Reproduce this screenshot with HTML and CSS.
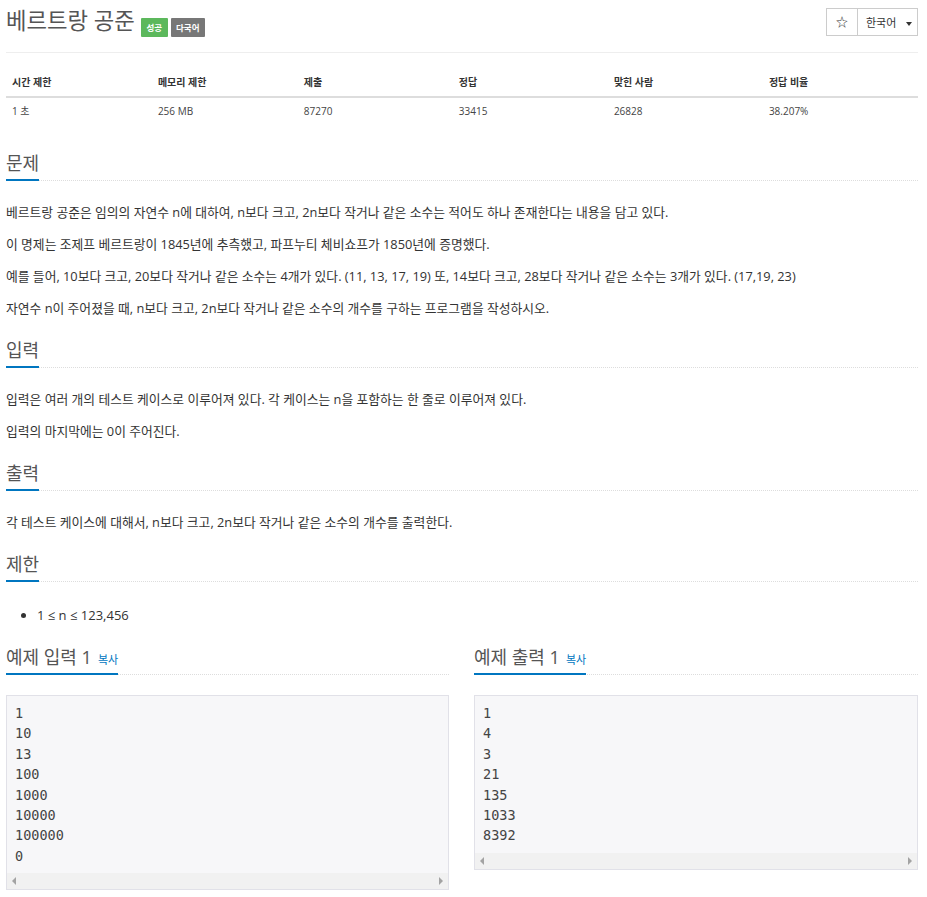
FILE: index.html
```html
<!DOCTYPE html>
<html lang="ko">
<head>
  <meta charset="UTF-8" />
  <meta name="viewport" content="width=device-width, initial-scale=1.0"/>
  <title>베르트랑 공준</title>
  <link rel="stylesheet" href="styles.css">
</head>
<body>

  <div class="container">

    <div class="page-header">
      <div class="title-wrap">
        <h1 class="problem-title">베르트랑 공준</h1>
        <span class="label label-success">성공</span>
        <span class="label label-default">다국어</span>
      </div>
      <div class="btn-group">
        <button class="btn btn-star">☆</button>
        <button class="btn btn-lang">한국어 <span class="caret"></span></button>
      </div>
    </div>

    <table class="problem-info">
      <thead>
        <tr>
          <th>시간 제한</th>
          <th>메모리 제한</th>
          <th>제출</th>
          <th>정답</th>
          <th>맞힌 사람</th>
          <th>정답 비율</th>
        </tr>
      </thead>
      <tbody>
        <tr>
          <td>1 초</td>
          <td>256 MB</td>
          <td>87270</td>
          <td>33415</td>
          <td>26828</td>
          <td>38.207%</td>
        </tr>
      </tbody>
    </table>

    <section class="problem-section">
      <div class="headline"><h2>문제</h2></div>
      <p>베르트랑 공준은 임의의 자연수 n에 대하여, n보다 크고, 2n보다 작거나 같은 소수는 적어도 하나 존재한다는 내용을 담고 있다.</p>
      <p>이 명제는 조제프 베르트랑이 1845년에 추측했고, 파프누티 체비쇼프가 1850년에 증명했다.</p>
      <p>예를 들어, 10보다 크고, 20보다 작거나 같은 소수는 4개가 있다. (11, 13, 17, 19) 또, 14보다 크고, 28보다 작거나 같은 소수는 3개가 있다. (17,19, 23)</p>
      <p>자연수 n이 주어졌을 때, n보다 크고, 2n보다 작거나 같은 소수의 개수를 구하는 프로그램을 작성하시오.</p>
    </section>

    <section class="problem-section">
      <div class="headline"><h2>입력</h2></div>
      <p>입력은 여러 개의 테스트 케이스로 이루어져 있다. 각 케이스는 n을 포함하는 한 줄로 이루어져 있다.</p>
      <p>입력의 마지막에는 0이 주어진다.</p>
    </section>

    <section class="problem-section">
      <div class="headline"><h2>출력</h2></div>
      <p>각 테스트 케이스에 대해서, n보다 크고, 2n보다 작거나 같은 소수의 개수를 출력한다.</p>
    </section>

    <section class="problem-section">
      <div class="headline"><h2>제한</h2></div>
      <ul class="limit-list">
        <li>1 ≤ n ≤ 123,456</li>
      </ul>
    </section>

    <div class="samples">
      <section class="sample">
        <div class="headline"><h2 class="sample-title"><span>예제 입력 1</span><a class="copy-btn" href="#">복사</a></h2></div>
        <div class="sample-box">
          <pre class="sampledata">1
10
13
100
1000
10000
100000
0</pre>
          <div class="hscroll"><span class="arrow-left"></span><span class="arrow-right"></span></div>
        </div>
      </section>
      <section class="sample">
        <div class="headline"><h2 class="sample-title"><span>예제 출력 1</span><a class="copy-btn" href="#">복사</a></h2></div>
        <div class="sample-box">
          <pre class="sampledata">1
4
3
21
135
1033
8392</pre>
          <div class="hscroll"><span class="arrow-left"></span><span class="arrow-right"></span></div>
        </div>
      </section>
    </div>

  </div>

</body>
</html>
```

FILE: styles.css
```css
body {
  margin: 0;
  padding: 0;
  font-family: 'Open Sans', 'Noto Sans CJK KR', sans-serif;
  color: #333;
  background: #fff;
}

.container {
  width: 912px;
  margin-left: 6px;
}

/* header */
.page-header {
  display: flex;
  justify-content: space-between;
  height: 52px;
  border-bottom: 1px solid #eee;
}

.title-wrap {
  display: flex;
  align-items: flex-start;
}

.problem-title {
  margin: 6px 0 0 0;
  font-size: 22.3px;
  line-height: 30px;
  font-weight: normal;
  color: #555;
}

.label {
  display: inline-block;
  margin-top: 18px;
  height: 19px;
  line-height: 19px;
  padding: 0 5.5px;
  font-size: 8.5px;
  font-weight: bold;
  color: #fff;
  border-radius: 1px;
}

.label-success {
  margin-left: 6px;
  background: #5cb85c;
}

.label-default {
  margin-left: 3px;
  background: #777;
}

.btn-group {
  display: flex;
  margin-top: 8px;
  height: 28px;
}

.btn {
  margin: 0;
  padding: 0;
  border: 1px solid #ccc;
  background: #fff;
  font-family: 'Open Sans', 'Noto Sans CJK KR', sans-serif;
  font-size: 11px;
  color: #333;
  height: 28px;
}

.btn-star {
  width: 32px;
  font-size: 12px;
}

.btn-lang {
  width: 61px;
  margin-left: -1px;
  text-align: left;
  padding-left: 8px;
}

.caret {
  display: inline-block;
  margin-left: 7px;
  vertical-align: middle;
  border-top: 4px solid #333;
  border-left: 3px solid transparent;
  border-right: 3px solid transparent;
}

/* info table */
.problem-info {
  width: 100%;
  margin-top: 13px;
  border-collapse: collapse;
  font-size: 10px;
}

.problem-info th {
  text-align: left;
  padding: 9px 6px 7px 6px;
  line-height: 14px;
  border-bottom: 2px solid #ddd;
  width: 17%;
}

.problem-info th:nth-child(1),
.problem-info th:nth-child(2) {
  width: 16%;
}

.problem-info td {
  padding: 6px;
  line-height: 14px;
  color: #444;
}

/* sections */
.problem-section {
  margin-top: 27px;
}

.problem-section + .problem-section,
.samples {
  margin-top: 20px;
}

.headline {
  border-bottom: 1px dotted #ddd;
  margin-bottom: 21px;
}

.headline h2 {
  display: inline-block;
  margin: 0 0 -1px 0;
  padding-bottom: 4px;
  font-size: 18px;
  line-height: 24px;
  font-weight: normal;
  color: #555;
  border-bottom: 2px solid #0076c0;
}

.headline .sample-title {
  display: inline-flex;
  align-items: baseline;
  gap: 6px;
  height: 24px;
}

.problem-section p {
  margin: 0 0 12px 0;
  font-size: 12.8px;
  line-height: 20px;
}

.problem-section p:last-child {
  margin-bottom: 0;
}

.limit-list {
  margin: 0;
  padding-left: 31px;
  font-size: 13px;
  line-height: 20px;
  padding-top: 2px;
}

/* samples */
.samples {
  display: grid;
  grid-template-columns: 443px 444px;
  column-gap: 25px;
  align-items: start;
}

.copy-btn {
  font-size: 11px;
  line-height: 16px;
  color: #0076c0;
  text-decoration: none;
}

.sample .headline {
  margin-bottom: 20px;
}

.sample-box {
  border: 1px solid #e1e1e8;
  background: #f7f7f9;
}

.sampledata {
  margin: 0;
  padding: 7px 8px;
  font-family: 'DejaVu Sans Mono', monospace;
  font-size: 13.5px;
  line-height: 20.4px;
  color: #444;
}

.hscroll {
  display: flex;
  justify-content: space-between;
  align-items: center;
  height: 16px;
  background: #f1f1f1;
  padding: 0 5px;
}

.arrow-left {
  border-right: 4px solid #a3a3a3;
  border-top: 4px solid transparent;
  border-bottom: 4px solid transparent;
}

.arrow-right {
  border-left: 4px solid #a3a3a3;
  border-top: 4px solid transparent;
  border-bottom: 4px solid transparent;
}
```
